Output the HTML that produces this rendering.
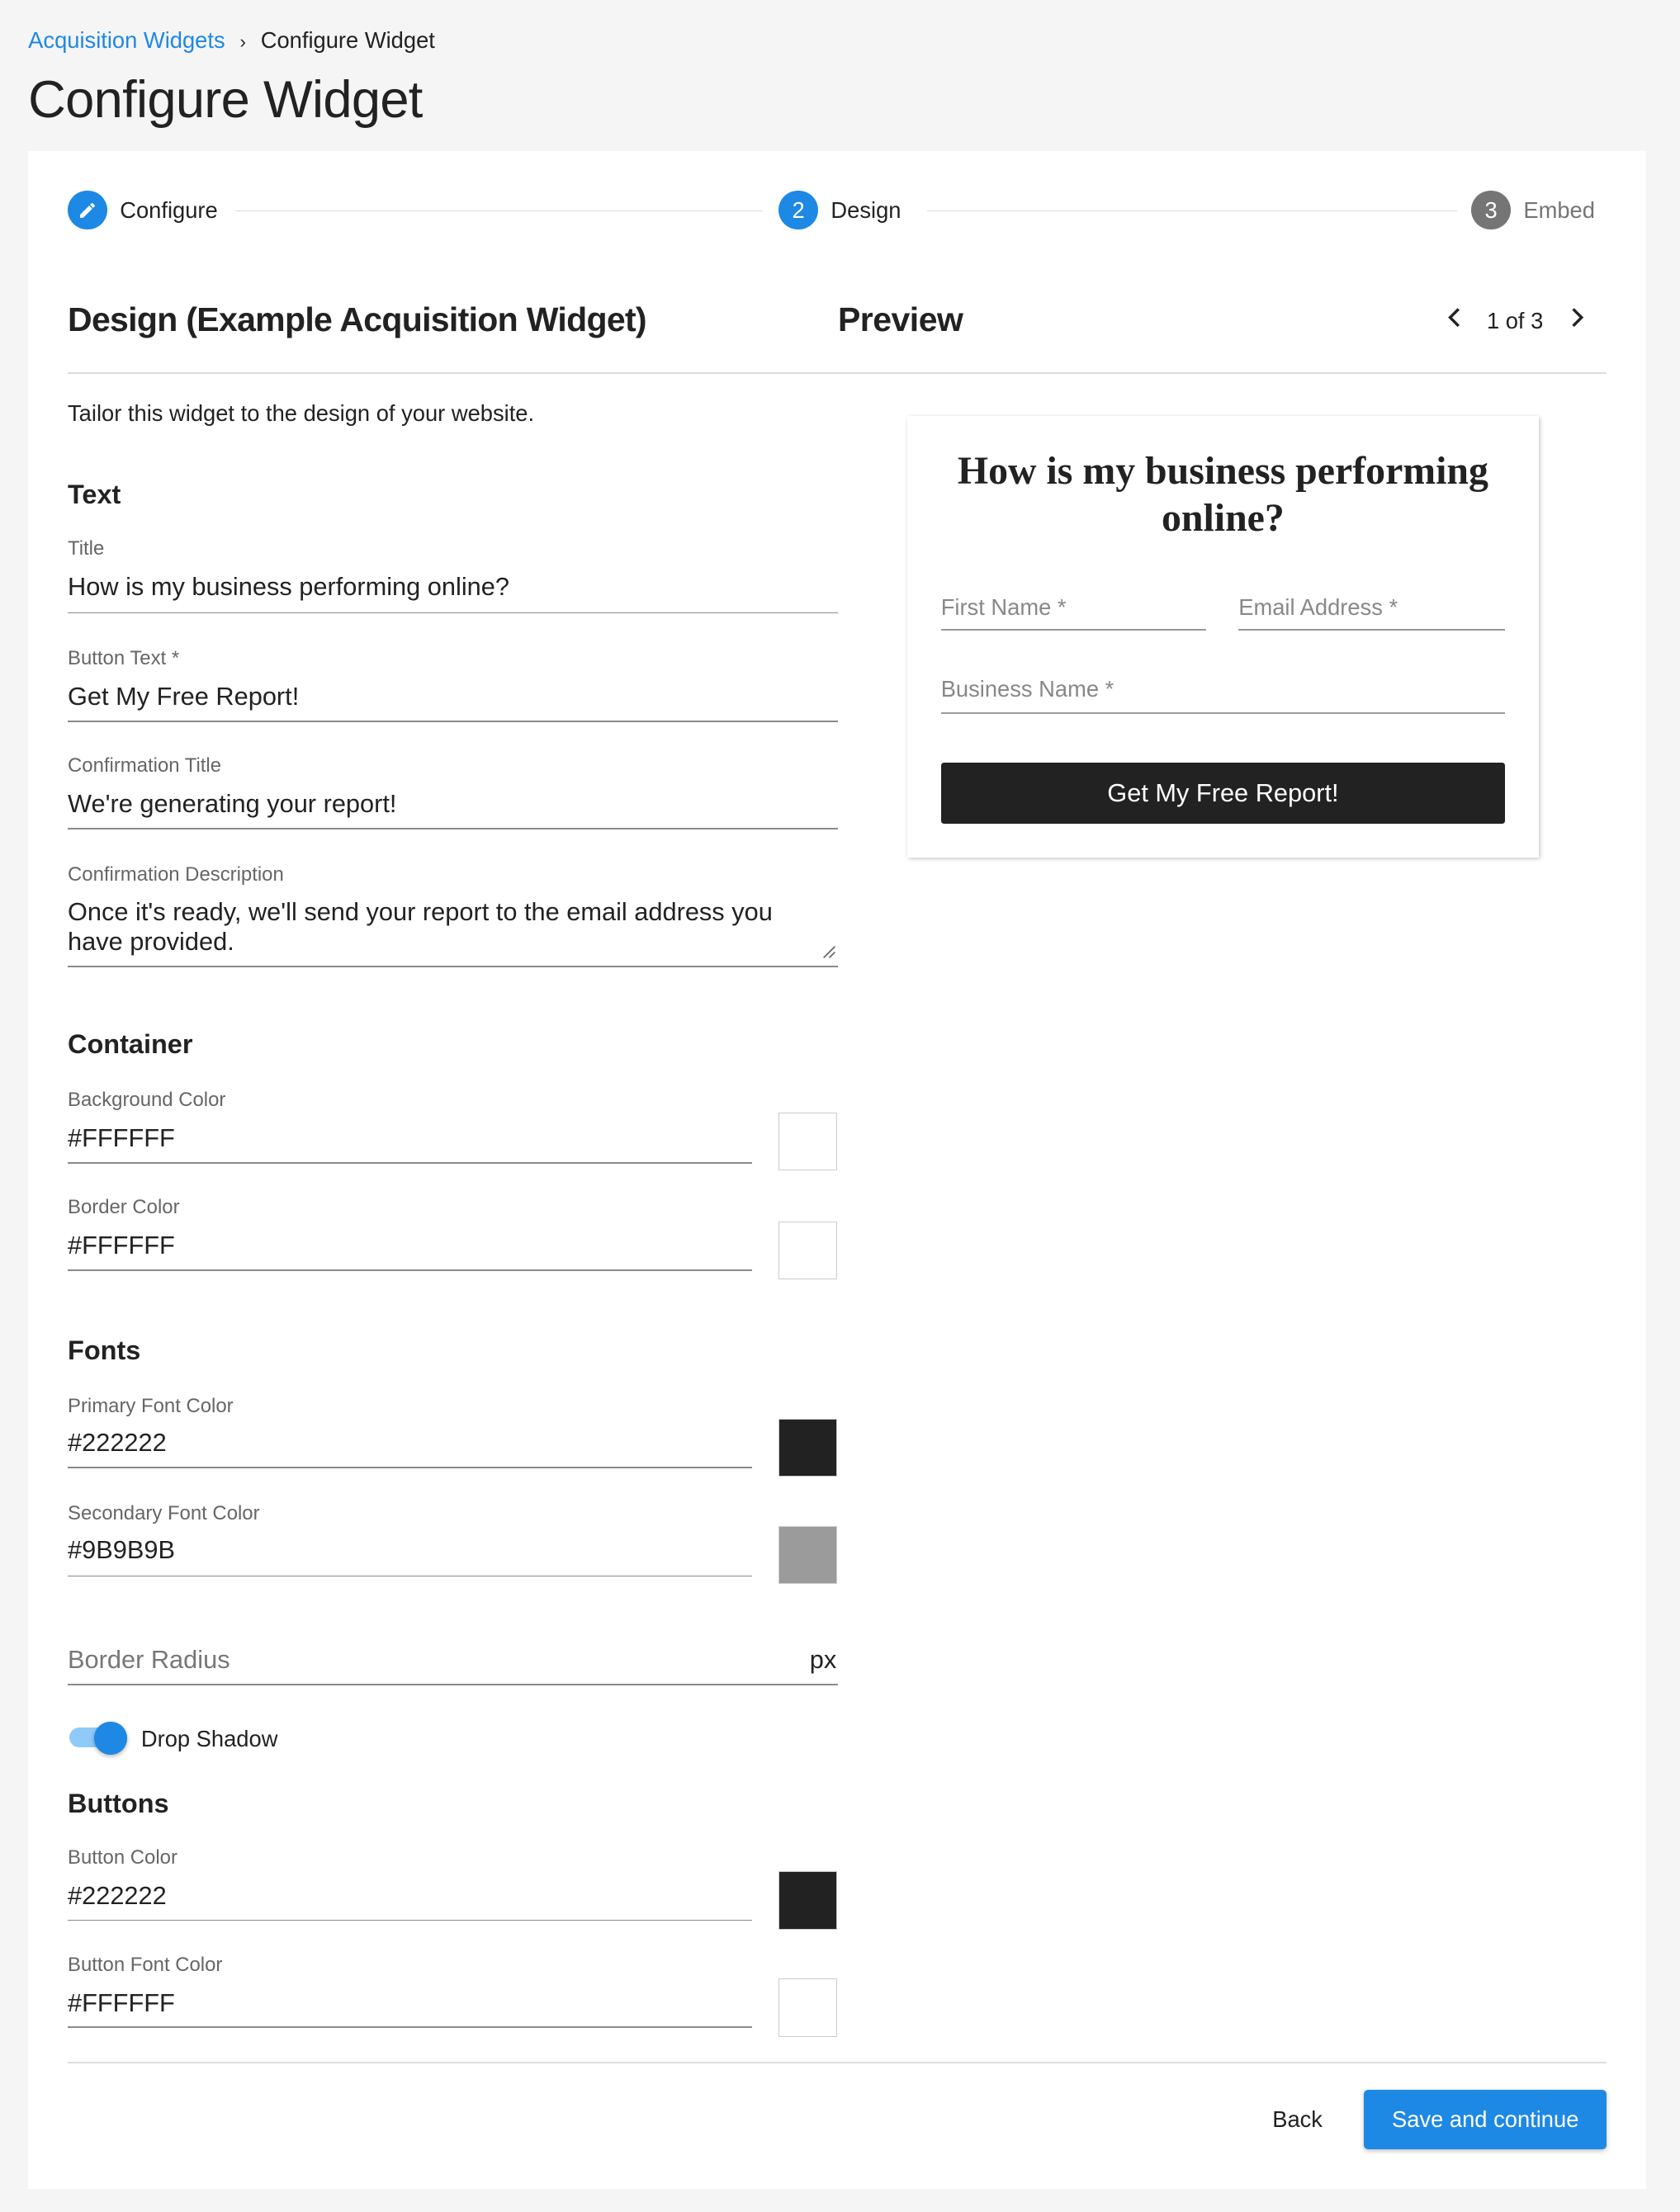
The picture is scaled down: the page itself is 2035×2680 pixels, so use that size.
<!DOCTYPE html>
<html><head><meta charset="utf-8"><style>
html{zoom:1.70868}
body{margin:0;width:1191px;height:1568px;background:#f5f5f5;font-family:"Liberation Sans",Arial,sans-serif;color:#222;position:relative;overflow:hidden}
.a{position:absolute;white-space:nowrap}
.card{position:absolute;left:20px;top:107px;width:1147px;height:1445px;background:#fff}
.lbl{position:absolute;font-size:14px;color:#666;line-height:16px}
.val{position:absolute;font-size:18px;color:#222;line-height:22px}
.ln{position:absolute;height:1px;background:#8a8a8a}
.h3{position:absolute;font-size:19px;font-weight:bold;line-height:22px}
.sw{position:absolute;left:552px;width:40px;height:40px;border:1px solid #ccc}
.circ{position:absolute;width:28px;height:28px;border-radius:50%;color:#fff;font-size:16px;text-align:center;line-height:28px}
</style></head><body>
<div class="a" style="left:20px;top:19px;font-size:16px;line-height:20px"><span style="color:#1e88e5">Acquisition Widgets</span> <span style="font-size:13px;margin:0 6px">›</span> Configure Widget</div>
<div class="a" style="left:20px;top:49px;font-size:37px;font-weight:300;line-height:44px;color:#222;letter-spacing:-0.4px">Configure Widget</div>
<div class="card"></div>
<div class="circ" style="left:48px;top:135px;background:#1e88e5"><svg width="14" height="14" viewBox="0 0 24 24" style="margin-top:7px"><path fill="#fff" d="M3 17.25V21h3.75L17.81 9.94l-3.75-3.75L3 17.25zM20.71 7.04a1 1 0 000-1.41l-2.34-2.34a1 1 0 00-1.41 0l-1.830 1.83 3.75 3.75 1.83-1.83z"/></svg></div>
<div class="a" style="left:85px;top:139px;font-size:16px;line-height:20px">Configure</div>
<div class="a" style="left:167px;top:149px;width:374px;height:1px;background:#ddd"></div>
<div class="circ" style="left:552px;top:135px;background:#1e88e5">2</div>
<div class="a" style="left:589px;top:139px;font-size:16px;line-height:20px">Design</div>
<div class="a" style="left:657px;top:149px;width:376px;height:1px;background:#ddd"></div>
<div class="circ" style="left:1043px;top:135px;background:#757575">3</div>
<div class="a" style="left:1080px;top:139px;font-size:16px;line-height:20px;color:#757575">Embed</div>
<div class="a" style="left:48px;top:213px;font-size:24px;font-weight:bold;line-height:28px;letter-spacing:-0.4px">Design (Example Acquisition Widget)</div>
<div class="a" style="left:594px;top:213px;font-size:24px;font-weight:bold;line-height:28px;letter-spacing:-0.3px">Preview</div>
<svg class="a" style="left:1023px;top:217px" width="16" height="16" viewBox="0 0 16 16"><path d="M11 2L5 8l6 6" fill="none" stroke="#222" stroke-width="2"/></svg>
<div class="a" style="left:1054px;top:218px;font-size:16px;line-height:20px">1 of 3</div>
<svg class="a" style="left:1110px;top:217px" width="16" height="16" viewBox="0 0 16 16"><path d="M5 2l6 6-6 6" fill="none" stroke="#222" stroke-width="2"/></svg>
<div class="a" style="left:48px;top:264px;width:1091px;height:1px;background:#ddd"></div>
<div class="a" style="left:48px;top:283px;font-size:16px;line-height:20px">Tailor this widget to the design of your website.</div>
<div class="h3" style="left:48px;top:340px">Text</div>
<div class="lbl" style="left:48px;top:381px">Title</div>
<div class="val" style="left:48px;top:405px">How is my business performing online?</div>
<div class="ln" style="left:48px;top:434px;width:546px"></div>
<div class="lbl" style="left:48px;top:459px">Button Text *</div>
<div class="val" style="left:48px;top:483px">Get My Free Report!</div>
<div class="ln" style="left:48px;top:511px;width:546px"></div>
<div class="lbl" style="left:48px;top:535px">Confirmation Title</div>
<div class="val" style="left:48px;top:559px">We're generating your report!</div>
<div class="ln" style="left:48px;top:587px;width:546px"></div>
<div class="lbl" style="left:48px;top:612px">Confirmation Description</div>
<div class="val" style="left:48px;top:636px;line-height:21px;white-space:normal;width:540px">Once it's ready, we'll send your report to the email address you have provided.</div>
<svg class="a" style="left:583px;top:670px" width="10" height="10"><path d="M1 9L9 1M5 9L9 5" stroke="#666" stroke-width="1"/></svg>
<div class="ln" style="left:48px;top:685px;width:546px"></div>
<div class="h3" style="left:48px;top:730px">Container</div>
<div class="lbl" style="left:48px;top:772px">Background Color</div>
<div class="val" style="left:48px;top:796px">#FFFFFF</div>
<div class="ln" style="left:48px;top:824px;width:485px"></div>
<div class="sw" style="top:789px;background:#fff"></div>
<div class="lbl" style="left:48px;top:848px">Border Color</div>
<div class="val" style="left:48px;top:872px">#FFFFFF</div>
<div class="ln" style="left:48px;top:900px;width:485px"></div>
<div class="sw" style="top:866px;background:#fff"></div>
<div class="h3" style="left:48px;top:947px">Fonts</div>
<div class="lbl" style="left:48px;top:989px">Primary Font Color</div>
<div class="val" style="left:48px;top:1012px">#222222</div>
<div class="ln" style="left:48px;top:1040px;width:485px"></div>
<div class="sw" style="top:1006px;background:#222"></div>
<div class="lbl" style="left:48px;top:1065px">Secondary Font Color</div>
<div class="val" style="left:48px;top:1088px">#9B9B9B</div>
<div class="ln" style="left:48px;top:1117px;width:485px"></div>
<div class="sw" style="top:1082px;background:#9b9b9b"></div>
<div class="val" style="left:48px;top:1166px;color:#777">Border Radius</div>
<div class="val" style="left:574px;top:1166px">px</div>
<div class="ln" style="left:48px;top:1194px;width:546px"></div>
<div class="a" style="left:49px;top:1225px;width:36px;height:14px;border-radius:7px;background:#90caf9"></div>
<div class="a" style="left:67px;top:1221px;width:23px;height:23px;border-radius:50%;background:#1e88e5;box-shadow:0 1px 3px rgba(0,0,0,.3)"></div>
<div class="a" style="left:100px;top:1223px;font-size:16px;line-height:20px">Drop Shadow</div>
<div class="h3" style="left:48px;top:1268px">Buttons</div>
<div class="lbl" style="left:48px;top:1309px">Button Color</div>
<div class="val" style="left:48px;top:1333px">#222222</div>
<div class="ln" style="left:48px;top:1361px;width:485px"></div>
<div class="sw" style="top:1327px;background:#222"></div>
<div class="lbl" style="left:48px;top:1385px">Button Font Color</div>
<div class="val" style="left:48px;top:1409px">#FFFFFF</div>
<div class="ln" style="left:48px;top:1437px;width:485px"></div>
<div class="sw" style="top:1403px;background:#fff"></div>
<div class="a" style="left:48px;top:1462px;width:1091px;height:1px;background:#ddd"></div>
<div class="a" style="left:902px;top:1493px;font-size:16px;line-height:20px">Back</div>
<div class="a" style="left:967px;top:1482px;width:172px;height:42px;background:#1e88e5;border-radius:3px;color:#fff;font-size:16px;line-height:42px;text-align:center;box-shadow:0 1px 3px rgba(0,0,0,.25)">Save and continue</div>
<div class="a" style="left:643px;top:295px;width:448px;height:313px;background:#fff;box-shadow:1px 1px 3px rgba(0,0,0,.25)"></div>
<div class="a" style="left:643px;top:318px;width:448px;text-align:center;white-space:normal;font-family:'Liberation Serif',serif;font-weight:bold;font-size:28px;line-height:33px">How is my business performing<br>online?</div>
<div class="a" style="left:667px;top:421px;font-size:16px;color:#888;line-height:20px">First Name *</div>
<div class="a" style="left:667px;top:446px;width:188px;height:1px;background:#999"></div>
<div class="a" style="left:878px;top:421px;font-size:16px;color:#888;line-height:20px">Email Address *</div>
<div class="a" style="left:878px;top:446px;width:189px;height:1px;background:#999"></div>
<div class="a" style="left:667px;top:479px;font-size:16px;color:#888;line-height:20px">Business Name *</div>
<div class="a" style="left:667px;top:505px;width:400px;height:1px;background:#999"></div>
<div class="a" style="left:667px;top:541px;width:400px;height:43px;background:#222;border-radius:2px;color:#fff;text-align:center;font-size:18px;line-height:43px">Get My Free Report!</div>
</body></html>
